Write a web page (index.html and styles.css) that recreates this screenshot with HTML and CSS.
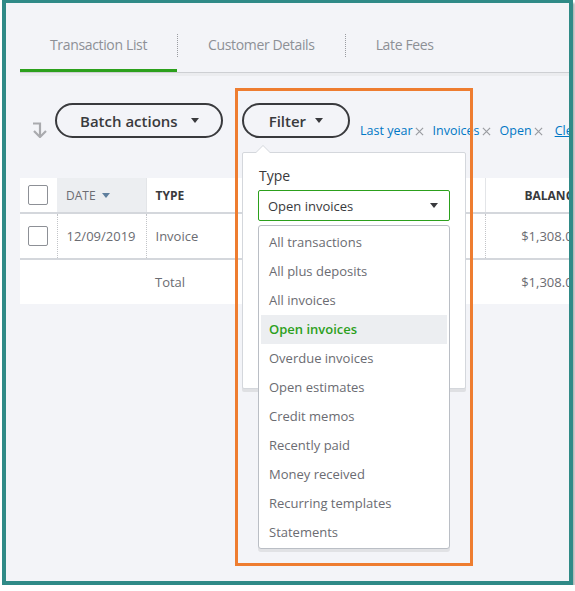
FILE: index.html
```html
<!DOCTYPE html>
<html lang="en">

<head>
    <meta charset="UTF-8">
    <title>Invoices</title>
    <link rel="stylesheet" href="styles.css">
</head>

<body>
    <div class="frame">

        <nav class="tabs">
            <a class="tab active">Transaction List</a>
            <span class="sep"></span>
            <a class="tab">Customer Details</a>
            <span class="sep"></span>
            <a class="tab">Late Fees</a>
        </nav>

        <div class="toolbar">
            <svg class="sort-icon" viewBox="0 0 15 16">
                <path d="M1 1.5 H8 V14.5" fill="none" stroke="#a9aaae" stroke-width="2.2" />
                <path d="M2 9 L8 15 L14 9" fill="none" stroke="#a9aaae" stroke-width="2.2" />
            </svg>
            <button class="pill">Batch actions <span class="caret"></span></button>
            <button class="pill filter-btn">Filter <span class="caret"></span></button>
            <div class="chips">
                <span class="chip">Last year<svg viewBox="0 0 10 10"><path d="M1 1 L9 9 M9 1 L1 9" stroke="#9a9ca1" stroke-width="1.3" /></svg></span>
                <span class="chip">Invoices<svg viewBox="0 0 10 10"><path d="M1 1 L9 9 M9 1 L1 9" stroke="#9a9ca1" stroke-width="1.3" /></svg></span>
                <span class="chip">Open<svg viewBox="0 0 10 10"><path d="M1 1 L9 9 M9 1 L1 9" stroke="#9a9ca1" stroke-width="1.3" /></svg></span>
                <a class="clear">Clear filter</a>
            </div>
        </div>

        <table class="txn">
            <colgroup>
                <col style="width:37px">
                <col style="width:89px">
                <col style="width:339px">
                <col style="width:115px">
            </colgroup>
            <tr>
                <th class="box"><span class="check"></span></th>
                <th class="sorted">DATE <span class="sort-caret"></span></th>
                <th>TYPE</th>
                <th class="money">BALANCE</th>
            </tr>
            <tr class="row">
                <td class="box"><span class="check"></span></td>
                <td>12/09/2019</td>
                <td>Invoice</td>
                <td class="money">$1,308.00</td>
            </tr>
            <tr class="total">
                <td></td>
                <td></td>
                <td>Total</td>
                <td class="money">$1,308.00</td>
            </tr>
        </table>

        <div class="popover">
            <p class="label">Type</p>
            <div class="select-wrap">
                <div class="select">Open invoices <span class="caret"></span></div>
                <ul class="menu">
                    <li>All transactions</li>
                    <li>All plus deposits</li>
                    <li>All invoices</li>
                    <li class="on">Open invoices</li>
                    <li>Overdue invoices</li>
                    <li>Open estimates</li>
                    <li>Credit memos</li>
                    <li>Recently paid</li>
                    <li>Money received</li>
                    <li>Recurring templates</li>
                    <li>Statements</li>
                </ul>
            </div>
        </div>

        <!-- orange callout drawn over the filter -->
        <div class="callout"></div>

    </div>
</body>

</html>
```

FILE: styles.css
```css
body {
    margin: 0;
    background: #fff;
    font-family: "Open Sans", "Liberation Sans", sans-serif;
}

.frame {
    position: relative;
    box-sizing: border-box;
    width: 571px;
    height: 585px;
    margin-left: 2px;
    border: 4px solid #2f8a87;
    border-top-width: 3px;
    background: #f3f4f8;
    overflow: hidden;
    box-shadow: 2px 3px 2px rgba(0, 0, 0, 0.3);
}

/* tabs */
.tabs {
    display: flex;
    margin: 21px 0 0 14px;
    border-bottom: 1px solid #cdcfd3;
    box-shadow: 0 3px 0 #ebecef;
}

.tab {
    padding: 11px 30px 17px;
    font-size: 14px;
    line-height: 20px;
    letter-spacing: -0.35px;
    color: #8d9096;
}

.tab.active {
    padding-bottom: 14px;
    border-bottom: 3px solid #2ca01c;
}

.sep {
    margin-top: 10px;
    height: 23px;
    border-left: 1px dotted #9a9ca1;
}

/* toolbar */
.toolbar {
    display: flex;
    align-items: center;
    margin: 30px 0 0 26px;
    white-space: nowrap;
}

.sort-icon {
    flex-shrink: 0;
    width: 15px;
    height: 16px;
    align-self: flex-end;
}

.pill {
    flex-shrink: 0;
    display: flex;
    align-items: center;
    gap: 13px;
    height: 35px;
    box-sizing: border-box;
    margin-left: 8px;
    padding: 0 22px 0 23px;
    border: 2px solid #393a3d;
    border-radius: 18px;
    background: transparent;
    font-family: inherit;
    font-size: 15px;
    font-weight: 600;
    color: #393a3d;
}

.filter-btn {
    margin-left: 19px;
    padding: 0 25px;
    gap: 9px;
}

.caret {
    width: 0;
    height: 0;
    border-left: 4.5px solid transparent;
    border-right: 4.5px solid transparent;
    border-top: 5px solid #393a3d;
}

.chips {
    display: flex;
    flex-shrink: 0;
    align-self: flex-end;
    margin: 0 0 -1px 10px;
    font-size: 12.5px;
    line-height: 16px;
}

.chip {
    display: flex;
    align-items: center;
    margin-right: 9px;
    color: #0077c5;
}

.chip svg {
    width: 9px;
    height: 9px;
    margin-left: 2px;
}

.clear {
    margin-left: 3px;
    color: #0077c5;
    text-decoration: underline;
}

/* table */
.txn {
    margin: 40px 0 0 14px;
    width: 580px;
    table-layout: fixed;
    border-collapse: collapse;
    background: #fff;
    font-size: 13px;
    color: #6b6c72;
}

.txn th {
    height: 34px;
    padding: 0 0 0 9px;
    text-align: left;
    font-size: 12px;
    font-weight: 700;
    color: #393a3d;
    border-bottom: 2px solid #d4d7dc;
}

.txn th.sorted {
    background: #eceef1;
    font-weight: 400;
    color: #6b6c72;
    border-right: 1px solid #e3e5e8;
}

.sort-caret {
    display: inline-block;
    margin-left: 3px;
    vertical-align: 2px;
    border-left: 4px solid transparent;
    border-right: 4px solid transparent;
    border-top: 5px solid #5f7f9e;
}

.txn td {
    height: 44px;
    padding: 0 0 0 9px;
}

.txn .box {
    padding-left: 8px;
}

.row td {
    border-bottom: 2px solid #d4d7dc;
}

.row td + td {
    border-left: 1px dotted #c2c4c8;
}

.txn .money {
    text-align: right;
    padding-right: 20px;
}

.txn th.money {
    border-left: 1px solid #e3e5e8;
}

.check {
    display: block;
    width: 20px;
    height: 20px;
    box-sizing: border-box;
    border: 1px solid #8d9096;
    border-radius: 2px;
    background: #fff;
}

/* filter popover */
.popover {
    position: absolute;
    left: 236px;
    top: 149px;
    width: 224px;
    height: 237px;
    box-sizing: border-box;
    padding: 13px 15px;
    background: #fff;
    border: 1px solid #d4d7dc;
    border-radius: 2px;
    box-shadow: 0 3px 0 #dfe0e3;
}

.popover::before,
.popover::after {
    content: "";
    position: absolute;
    border-style: solid;
    border-color: transparent;
}

.popover::before {
    top: -8px;
    left: 12px;
    border-width: 0 8px 8px;
    border-bottom-color: #d4d7dc;
}

.popover::after {
    top: -7px;
    left: 13px;
    border-width: 0 7px 7px;
    border-bottom-color: #fff;
}

.label {
    margin: 0 0 4px 1px;
    font-size: 14px;
    line-height: 20px;
    color: #393a3d;
}

.select-wrap {
    position: relative;
}

.select {
    display: flex;
    align-items: center;
    justify-content: space-between;
    height: 31px;
    box-sizing: border-box;
    padding: 0 11px 0 9px;
    border: 1px solid #2ca01c;
    border-radius: 2px;
    font-size: 13px;
    color: #393a3d;
}

.select .caret {
    border-left-width: 4px;
    border-right-width: 4px;
}

.menu {
    position: absolute;
    left: 0;
    right: 0;
    top: 35px;
    list-style: none;
    margin: 0;
    padding: 2px 2px 1px;
    background: #fff;
    border: 1px solid #babec5;
    border-radius: 3px;
    box-shadow: 0 3px 0 #e1e2e5;
}

.menu li {
    height: 29px;
    line-height: 29px;
    padding-left: 8px;
    font-size: 13px;
    color: #6b6c72;
}

.menu li.on {
    background: #eceef1;
    color: #2ca01c;
    font-weight: 600;
}

.callout {
    position: absolute;
    left: 229px;
    top: 85px;
    width: 238px;
    height: 478px;
    box-sizing: border-box;
    border: 3px solid #ee7d30;
    pointer-events: none;
}
```
